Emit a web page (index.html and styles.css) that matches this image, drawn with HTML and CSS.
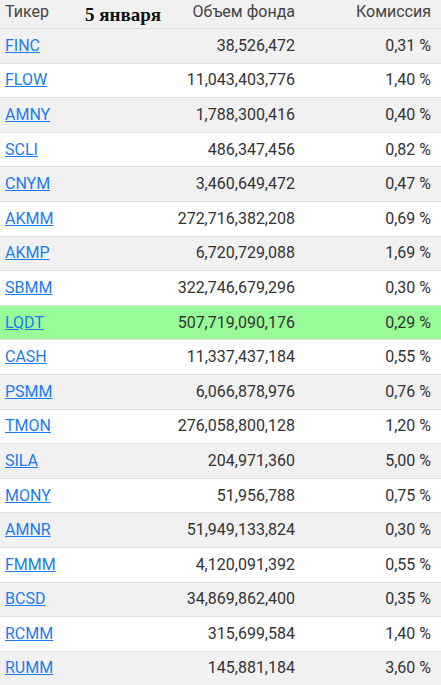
FILE: index.html
```html
<!DOCTYPE html>
<html lang="ru">
<head>
<meta charset="utf-8">
<link rel="stylesheet" href="styles.css">
</head>
<body>
<div class="wrap">
  <div class="date">5 января</div>
  <table class="funds">
    <thead>
      <tr><th class="c-t">Тикер</th><th class="c-v">Объем фонда</th><th class="c-f">Комиссия</th></tr>
    </thead>
    <tbody>
      <tr><td class="c-t"><a href="#">FINC</a></td><td class="c-v">38,526,472</td><td class="c-f">0,31 %</td></tr>
      <tr><td class="c-t"><a href="#">FLOW</a></td><td class="c-v">11,043,403,776</td><td class="c-f">1,40 %</td></tr>
      <tr><td class="c-t"><a href="#">AMNY</a></td><td class="c-v">1,788,300,416</td><td class="c-f">0,40 %</td></tr>
      <tr><td class="c-t"><a href="#">SCLI</a></td><td class="c-v">486,347,456</td><td class="c-f">0,82 %</td></tr>
      <tr><td class="c-t"><a href="#">CNYM</a></td><td class="c-v">3,460,649,472</td><td class="c-f">0,47 %</td></tr>
      <tr><td class="c-t"><a href="#">AKMM</a></td><td class="c-v">272,716,382,208</td><td class="c-f">0,69 %</td></tr>
      <tr><td class="c-t"><a href="#">AKMP</a></td><td class="c-v">6,720,729,088</td><td class="c-f">1,69 %</td></tr>
      <tr><td class="c-t"><a href="#">SBMM</a></td><td class="c-v">322,746,679,296</td><td class="c-f">0,30 %</td></tr>
      <tr class="hl"><td class="c-t"><a href="#">LQDT</a></td><td class="c-v">507,719,090,176</td><td class="c-f">0,29 %</td></tr>
      <tr><td class="c-t"><a href="#">CASH</a></td><td class="c-v">11,337,437,184</td><td class="c-f">0,55 %</td></tr>
      <tr><td class="c-t"><a href="#">PSMM</a></td><td class="c-v">6,066,878,976</td><td class="c-f">0,76 %</td></tr>
      <tr><td class="c-t"><a href="#">TMON</a></td><td class="c-v">276,058,800,128</td><td class="c-f">1,20 %</td></tr>
      <tr><td class="c-t"><a href="#">SILA</a></td><td class="c-v">204,971,360</td><td class="c-f">5,00 %</td></tr>
      <tr><td class="c-t"><a href="#">MONY</a></td><td class="c-v">51,956,788</td><td class="c-f">0,75 %</td></tr>
      <tr><td class="c-t"><a href="#">AMNR</a></td><td class="c-v">51,949,133,824</td><td class="c-f">0,30 %</td></tr>
      <tr><td class="c-t"><a href="#">FMMM</a></td><td class="c-v">4,120,091,392</td><td class="c-f">0,55 %</td></tr>
      <tr><td class="c-t"><a href="#">BCSD</a></td><td class="c-v">34,869,862,400</td><td class="c-f">0,35 %</td></tr>
      <tr><td class="c-t"><a href="#">RCMM</a></td><td class="c-v">315,699,584</td><td class="c-f">1,40 %</td></tr>
      <tr><td class="c-t"><a href="#">RUMM</a></td><td class="c-v">145,881,184</td><td class="c-f">3,60 %</td></tr>
    </tbody>
  </table>
</div>
</body>
</html>
```
FILE: styles.css
```css
html, body {
  margin: 0;
  padding: 0;
  background: #ffffff;
}
.wrap {
  position: relative;
  width: 441px;
  font-family: Roboto, "Liberation Sans", sans-serif;
}
.date {
  position: absolute;
  left: 85px;
  top: 4px;
  font-family: "Liberation Serif", "Times New Roman", serif;
  font-weight: bold;
  font-size: 19px;
  line-height: 22px;
  color: #111;
}
.funds {
  width: 441px;
  border-collapse: separate;
  border-spacing: 0;
  table-layout: fixed;
  font-size: 16px;
  line-height: 18px;
  color: #333;
}
.funds th {
  box-sizing: border-box;
  height: 29px;
  padding: 0 5px 4px;
  font-weight: normal;
  color: #444;
  background: #f1f1f1;
  border-bottom: 1px solid #dcdcdc;
  vertical-align: middle;
}
.funds td {
  box-sizing: border-box;
  height: 34.6px;
  padding: 0 5px;
  border-bottom: 1px solid #e0e0e0;
  vertical-align: middle;
}
.funds tbody tr:nth-child(odd) td {
  background: #f1f1f1;
}
.funds tbody tr.hl td {
  background: #98fb98;
}
.c-t { text-align: left; width: 130px; }
.c-v { text-align: right; }
.funds .c-f { text-align: right; width: 141px; padding-right: 10px; }
.funds a {
  color: #1a7cf0;
  text-decoration: underline;
}
```
